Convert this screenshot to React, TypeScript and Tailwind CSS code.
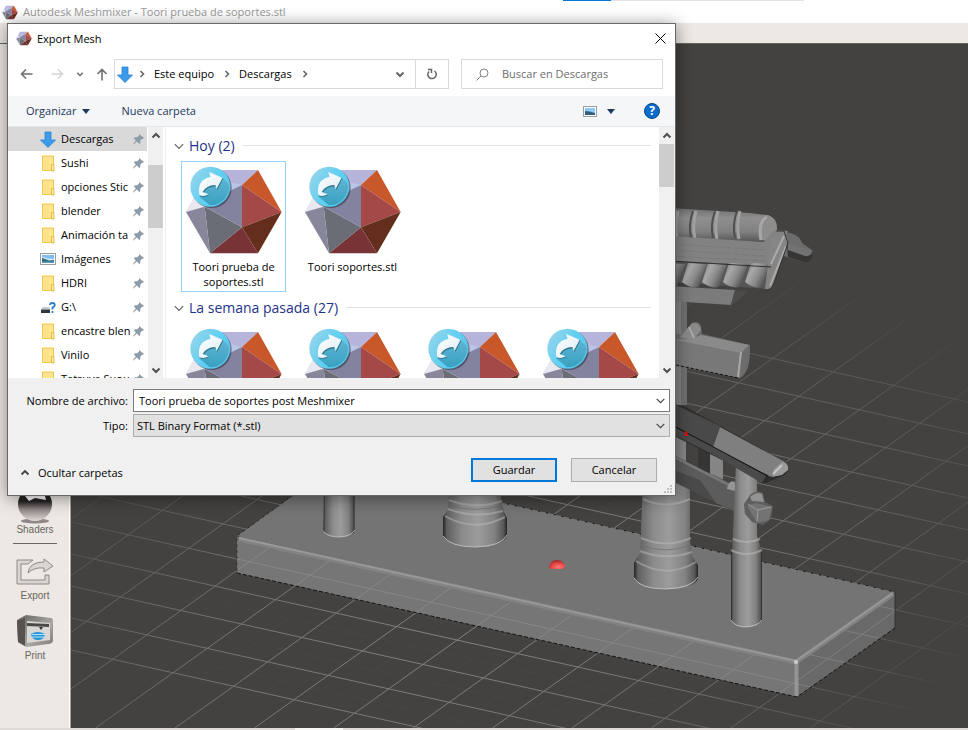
import React from "react";

function GemIcon({ className }: { className?: string }) {
  return (
    <svg viewBox="60 132 294 256" className={className} aria-hidden="true">
      <GemFacets />
    </svg>
  );
}

function GemFacets() {
  return (
    <g>
      <path d="M135 135H279L231 180L119 245L63 261Z" fill="#b6b4da" />
      <path d="M231 180L119 245L150 160Z" fill="#b9c5e6" />
      <path d="M63 261L119 245L100 190Z" fill="#e9e8f0" />
      <path d="M279 135L350 261L231 180Z" fill="#c85729" />
      <path d="M231 180L350 261L231 307Z" fill="#a44848" />
      <path d="M350 261L279 385L231 307Z" fill="#652d1b" />
      <path d="M231 307L279 385H135Z" fill="#783336" />
      <path d="M119 245L231 307L135 385Z" fill="#6a6d75" />
      <path d="M63 261L119 245L135 385Z" fill="#88869a" />
      <path d="M231 180V307L119 245L200 195Z" fill="#83829f" />
    </g>
  );
}

function StlThumb() {
  return (
    <svg viewBox="54 117 306 276" className="block h-[92px] w-[102px] shrink-0" aria-hidden="true">
      <defs>
        <linearGradient id="badge" x1="0" y1="0.2" x2="1" y2="0.8">
          <stop offset="0" stopColor="#98d4ea" />
          <stop offset="0.5" stopColor="#62d0f2" />
          <stop offset="1" stopColor="#52c4e8" />
        </linearGradient>
        <linearGradient id="badgeShade" x1="0" y1="0" x2="0" y2="1">
          <stop offset="0" stopColor="#5fb4d4" />
          <stop offset="1" stopColor="#2b9ab8" />
        </linearGradient>
        <linearGradient id="arrow" x1="0" y1="0" x2="1" y2="1">
          <stop offset="0" stopColor="#ffffff" />
          <stop offset="1" stopColor="#dcecf2" />
        </linearGradient>
        <clipPath id="badgeClip"><circle cx="136" cy="185" r="56" /></clipPath>
      </defs>
      <GemFacets />
      <circle cx="140" cy="189" r="60" fill="#2b3340" opacity="0.55" />
      <circle cx="136" cy="185" r="60" fill="url(#badge)" />
      <g clipPath="url(#badgeClip)">
        <path d="M172 159L230 210L170 270L102 214L120 190Z" fill="url(#badgeShade)" />
      </g>
      <path d="M135 144L175 160L157 195L154 184Q128 184 116 203L133 210Q120 218 105 214Q97 166 137 159Z" fill="#2b6f82" />
      <path d="M133 141L173 158L155 192L151 180Q124 181 113 201L131 208Q118 216 103 211Q95 164 136 156Z" fill="url(#arrow)" />
    </svg>
  );
}

function DownArrow({ className }: { className?: string }) {
  return (
    <svg viewBox="0 0 16 17" className={className} aria-hidden="true">
      <path d="M5 1H11V9H15.500L8 16.500L.5 9H5Z" fill="#3a9bea" stroke="#2b83cf" strokeWidth="0.8" />
    </svg>
  );
}

function FolderIcon() {
  return (
    <svg viewBox="0 0 16 17" className="h-[17px] w-4" aria-hidden="true">
      <path d="M2.500 1H13.500V15.500H2.500Z" fill="#ffe38d" stroke="#efc751" />
      <path d="M11.500 9.500H14V16H11.500Z" fill="#ffe9a6" stroke="#e9bd44" />
    </svg>
  );
}

function PictureIcon() {
  return (
    <svg viewBox="0 0 16 12" className="h-3 w-4" aria-hidden="true">
      <rect x=".5" y=".5" width="15" height="11" fill="#fff" stroke="#979ea5" />
      <rect x="2" y="2" width="12" height="8" fill="#7cc0ef" />
      <path d="M2 4L8 5.500L14 6V8H2Z" fill="#d5eaf4" />
      <path d="M2 5Q6 6 9 7.500L14 7V10H2Z" fill="#2f6a72" />
      <path d="M2 8.500H14V10H2Z" fill="#5b9cc4" />
    </svg>
  );
}

function DriveIcon() {
  return (
    <svg viewBox="0 0 16 14" className="h-3.5 w-4" aria-hidden="true">
      <path d="M3 7H9L10 9.500H1Z" fill="#c4c6c8" />
      <path d="M1 9.500H10V13H1Z" fill="#35383b" />
      <path d="M10 5Q10 3 12.300 3Q14.800 3 14.800 5Q14.800 6.500 12.500 7.500V9.500M12.500 11V13" fill="none" stroke="#fff" strokeWidth="3" />
      <path d="M10 5Q10 3 12.300 3Q14.800 3 14.800 5Q14.800 6.500 12.500 7.500V9.500M12.500 11V13" fill="none" stroke="#2c7fc2" strokeWidth="1.800" />
    </svg>
  );
}

function PinIcon() {
  return (
    <svg viewBox="0 0 11 11" className="h-[11px] w-[11px] shrink-0" aria-hidden="true">
      <path d="M6 0L11 4L9.500 5L8.500 5L7 7.500L7.500 9L6.500 10L3.800 7.500L.5 10.500L0 10L2.800 6.500L.8 4.300L2 3.300H4L6 1.800Z" fill="#8d9ba6" />
    </svg>
  );
}

type Dir = "up" | "down" | "right";
const chevrons: Record<Dir, string> = {
  up: "M1.500 6.500L5 3L8.500 6.500",
  down: "M1.500 3.500L5 7L8.500 3.500",
  right: "M3.500 2L6.500 5L3.500 8",
};

function Chevron({ dir, className, stroke = "#555", width = 1.6 }: { dir: Dir; className?: string; stroke?: string; width?: number }) {
  return (
    <svg viewBox="0 0 10 10" className={className ?? "h-2.5 w-2.5"} aria-hidden="true">
      <path d={chevrons[dir]} fill="none" stroke={stroke} strokeWidth={width} />
    </svg>
  );
}

const majorSlow = Array.from({ length: 15 }, (_, i) => i - 10);
const majorFast = Array.from({ length: 14 }, (_, i) => i - 5);

function GridLines() {
  return (
    <g strokeWidth="1">
      {majorSlow.map((k) => (
        <g key={`s${k}`}>
          <line x1="71" y1={522 + 32 * k} x2="968" y2={722 + 32 * k} stroke="#a2a2a0" />
          <line x1="71" y1={506 + 32 * k} x2="968" y2={706 + 32 * k} stroke="#a2a2a0" opacity="0.08" />
        </g>
      ))}
      {majorFast.map((j) => (
        <g key={`f${j}`}>
          <line x1={175 + 79.4 * j} y1="728" x2={175 + 79.4 * j + 701} y2="228" stroke="#a2a2a0" />
          <line x1={215 + 79.4 * j} y1="728" x2={215 + 79.4 * j + 701} y2="228" stroke="#a2a2a0" opacity="0.08" />
        </g>
      ))}
    </g>
  );
}

function Scene() {
  return (
    <svg viewBox="71 44 897 684" preserveAspectRatio="xMinYMin slice" className="block h-full min-h-0 w-full" role="img" aria-label="Modelo 3D">
      <defs>
        <radialGradient id="fade" gradientUnits="userSpaceOnUse" cx="0" cy="0" r="1" gradientTransform="translate(480 610) rotate(-18) scale(600 310)">
          <stop offset="0" stopColor="#fff" stopOpacity="0.7" />
          <stop offset="0.5" stopColor="#fff" stopOpacity="0.5" />
          <stop offset="0.8" stopColor="#fff" stopOpacity="0.25" />
          <stop offset="1" stopColor="#fff" stopOpacity="0" />
        </radialGradient>
        <mask id="gridMask" maskUnits="userSpaceOnUse" x="71" y="44" width="897" height="684">
          <rect x="71" y="44" width="897" height="684" fill="url(#fade)" />
        </mask>
        <linearGradient id="pole">
          <stop offset="0" stopColor="#222" />
          <stop offset="0.06" stopColor="#606060" />
          <stop offset="0.3" stopColor="#8b8b8b" />
          <stop offset="0.55" stopColor="#9c9c9c" />
          <stop offset="0.8" stopColor="#828282" />
          <stop offset="0.95" stopColor="#565656" />
          <stop offset="1" stopColor="#222" />
        </linearGradient>
        <linearGradient id="tube" x1="0" y1="0" x2="0" y2="1">
          <stop offset="0" stopColor="#6e6e6e" />
          <stop offset="0.3" stopColor="#8f8f8f" />
          <stop offset="0.7" stopColor="#808080" />
          <stop offset="1" stopColor="#555" />
        </linearGradient>
        <linearGradient id="tile" x1="0" y1="0" x2="1" y2="0.5">
          <stop offset="0" stopColor="#6a6a6a" />
          <stop offset="0.35" stopColor="#a8a8a8" />
          <stop offset="0.65" stopColor="#888" />
          <stop offset="1" stopColor="#484848" />
        </linearGradient>
        <radialGradient id="dome" cx="0.6" cy="0.8" r="0.9">
          <stop offset="0" stopColor="#ff7a7a" />
          <stop offset="0.5" stopColor="#e64343" />
          <stop offset="1" stopColor="#7e2020" />
        </radialGradient>
        <clipPath id="faces"><path d="M237 539L796 664L895 594V628L797 697L237 573Z" /></clipPath>
        <clipPath id="far"><path d="M460 484V493L895 592V480Z" /></clipPath>
      </defs>

      <rect x="71" y="44" width="1400" height="1000" fill="#434240" />
      <g mask="url(#gridMask)"><GridLines /></g>

      {/* slab */}
      <path d="M237 536L350 455L895 592L796 662Z" fill="#747474" />
      <path d="M237 537L796 662L797 697L237 573Z" fill="#767676" />
      <path d="M796 662L895 592V628L797 697Z" fill="#696969" />
      <g clipPath="url(#faces)" opacity="0.4"><GridLines /></g>
      <path d="M239 539L796 662L893 594" fill="none" stroke="#838383" strokeWidth="5" strokeLinejoin="round" />
      <path d="M239 538L796 661L893 593" fill="none" stroke="#989898" strokeWidth="2" />
      <path d="M796.500 663V696" stroke="#949494" strokeWidth="4" />
      <circle cx="796" cy="662" r="2" fill="#cfcfcf" />
      <path d="M237 573L797 697L895 628" fill="none" stroke="#141414" strokeDasharray="4 2" />
      <path d="M895 628V592" stroke="#333" />
      <path d="M293 495L237 536V573" fill="none" stroke="#2a2a2a" strokeDasharray="2 4" />
      {/* ground beyond the slab's far edge */}
      <path d="M460 484V493L895 592V480Z" fill="#434240" />
      <g mask="url(#gridMask)"><g clipPath="url(#far)"><GridLines /></g></g>
      <path d="M468 495L895 592" stroke="#111" strokeDasharray="2 6" />

      {/* left pole */}
      <path d="M324 480H354.500V531Q354 537 339 537Q325 536 323.500 530Z" fill="url(#pole)" />
      <path d="M324 532Q328 537 340 537Q351 536 355 530" fill="none" stroke="#c9c3c3" opacity="0.8" />
      {/* second column */}
      <path d="M450 480H501V500L504 512L507 518V535Q505 547 476 547Q446 546 443 535V517L448 510Z" fill="url(#pole)" />
      <path d="M449 500Q475 510 502 501M448 509Q475 519 503 511M445 516Q474 533 505 517" fill="none" stroke="#bcbaba" strokeWidth="2" opacity="0.5" />
      <path d="M449 505Q475 514 503 505" fill="none" stroke="#6c6c6c" opacity="0.7" />
      <path d="M443 536Q450 547 476 547Q502 546 507 535" fill="none" stroke="#cfc8c8" opacity="0.8" />
      {/* marker */}
      <path d="M549 568Q550 560 557 560Q564 560 565 567L562 569H552Z" fill="url(#dome)" />

      {/* rear column */}
      <path d="M674 300H687V405H674Z" fill="#707070" />
      <path d="M674 300H681V405H674Z" fill="#838383" />

      {/* roof */}
      <path d="M670 286L735 290L731 305L670 301Z" fill="#7b7b7b" />
      <path d="M735 290L749 291L731 306Z" fill="#4c4b4a" />
      <path d="M783 232Q799 233 802 243L812 250Q814 260 806 263L784 256Z" fill="#6c6c6c" />
      <path d="M787 245L812 252Q814 261 806 263L788 257Z" fill="#353535" />
      <path d="M788 243L812 251Q811 257 805 256L788 250Z" fill="#727272" />
      <path d="M670 208L750 213L767 215Q775 217 777 230L770 242L670 237Z" fill="url(#tube)" />
      {[679, 697, 719, 741].map((x) => (
        <g key={x}>
          <path d={`M${x - 4} 211Q${x - 9} 225 ${x - 6} 238`} fill="none" stroke="#505050" strokeWidth="2" />
          <path d={`M${x - 1} 211Q${x - 5} 225 ${x - 2} 239`} fill="none" stroke="#a3a0a0" strokeWidth="3" />
        </g>
      ))}
      <path d="M759 239Q756 215 768 215Q778 218 777 231L767 241Z" fill="#8d8d8d" />
      <path d="M761 240Q758 221 767 217" fill="none" stroke="#aaa6a6" strokeWidth="3" />
      <path d="M670 236L764 242L774 230L788 231L772 266L670 261Z" fill="#828282" />
      <path d="M670 244L765 250M670 250L766 256M670 256L766 261" stroke="#7a7a7a" strokeDasharray="7 2" />
      <path d="M670 261L771 267L766 289L670 282Z" fill="#565656" />
      {[666, 688, 708, 729, 751].map((x) => (
        <path key={x} d={`M${x} 263L${x + 19} 264L${x + 11} 287Q${x + 2} 289 ${x - 6} 282Z`} fill="url(#tile)" />
      ))}
      <path d="M771 239L785 232L788 241L773 285Q770 291 765 289Z" fill="#858585" />
      <path d="M784 236L771 264M786 246L770 286" stroke="#aeaaaa" strokeWidth="2" />
      <path d="M670 261L771 267" stroke="#303030" />
      <path d="M765 290Q771 291 774 283L788 243L784 231H776" fill="none" stroke="#333" />

      {/* upper cross bar */}
      <path d="M670 332L684 336L694 322Q700 322 701 327L702 334L750 345Q751 372 740 378L670 365Z" fill="#6c6c6c" />
      <path d="M676 339L686 336L742 350L740 378L676 365Z" fill="#787878" />
      <path d="M680 337L692 323Q700 322 701 330L693 340Z" fill="#8a8a8a" />
      <path d="M690 339L701 335L749 345L741 353L676 340Z" fill="#8a8a8a" />
      <path d="M689 327L694 338M741 352L738 377" fill="none" stroke="#aaa6a6" strokeWidth="2" />
      <path d="M676 365L738 378" stroke="#101010" strokeDasharray="3 2" />

      {/* right column */}
      <path d="M643 480H690V540L692 556L698 565V578Q696 589 666 589Q637 588 634 577V563L640 553Z" fill="url(#pole)" />
      <path d="M643 499Q666 510 690 499M641 538Q666 549 691 538M640 551Q666 561 692 552M636 561Q666 580 696 562" fill="none" stroke="#bcb8b8" strokeWidth="2" opacity="0.5" />
      <path d="M641 545Q666 555 691 545" fill="none" stroke="#6c6c6c" opacity="0.7" />
      <path d="M634 578Q640 589 666 589Q692 588 698 577" fill="none" stroke="#d0c9c9" opacity="0.8" />

      {/* lower braces */}
      <path d="M674 430H686V462H674Z" fill="#858585" />
      <path d="M698 445L712 449V481L698 476Z" fill="#353535" />
      <path d="M710 450L723 458V480L710 482Z" fill="#858585" />
      <path d="M674 455L700 469L735 485V512L674 482Z" fill="#4a4a4a" />
      <path d="M674 459L735 489V511L716 503L700 480L674 470Z" fill="#5c5c5c" />
      <path d="M674 457L735 488" stroke="#777" strokeWidth="3" />
      <path d="M727 489Q729 479 735 482V491Z" fill="#959595" />

      {/* right pole */}
      <path d="M736 464H757V535L762 552V620Q760 627 746 627Q733 626 731 620V552L733 530Z" fill="url(#pole)" />
      <path d="M733 539Q746 545 760 539M731 550Q746 558 762 550" fill="none" stroke="#b9b6b6" strokeWidth="2" opacity="0.6" />
      <path d="M731 620Q735 627 746 627Q758 626 762 620" fill="none" stroke="#d0caca" opacity="0.8" />

      {/* slanted beam */}
      <path d="M674 404L686 407L787 463Q791 471 783 476L770 481Q765 484 762 483L740 469L674 436Z" fill="#2c2c2c" />
      <path d="M674 404L720 426L713 447L674 426Z" fill="#494949" />
      <path d="M720 427L785 462L771 477L713 447Z" fill="#7f7f7f" />
      <path d="M674 427L715 448L766 476L762 483L710 453L674 435Z" fill="#4a4a4a" />
      <path d="M674 426L768 476" stroke="#151515" />
      <path d="M772 477L774 469L782 462Q789 462 788 470L782 475Z" fill="#9a9a9a" />
      <path d="M773 474L782 465" stroke="#c8c4c4" strokeWidth="2" />
      <path d="M685 431L687 432L688 436H685Z" fill="#f00" />

      {/* knob */}
      <path d="M744 504L750 495Q757 489 763 493L765 502L773 506L771 519L763 525L752 522L745 514Z" fill="#5e5e5e" />
      <path d="M750 497Q757 491 762 494L764 502L752 501Z" fill="#939393" />
      <path d="M747 506L756 503L772 507L769 520L757 523Z" fill="#737373" />
      <path d="M748 504L757 510L771 507M758 510L757 521" fill="none" stroke="#9c9c9c" />
    </svg>
  );
}

function ToolLabel({ children }: { children: React.ReactNode }) {
  return <span className="font-['Liberation_Sans',sans-serif] text-[10px] leading-3 text-[#686460]">{children}</span>;
}

function ToolSidebar() {
  return (
    <aside className="flex w-[71px] shrink-0 flex-col items-center border-r border-[#a5a3a0] bg-[#ede8e3] pt-[444px] shadow-[inset_-1px_0_0_#ffffff]">
      <button className="flex flex-col items-center">
        <svg viewBox="0 0 40 36" className="h-9 w-10" aria-hidden="true">
          <defs>
            <linearGradient id="ball" x1="0" y1="0" x2="0" y2="1">
              <stop offset="0" stopColor="#222" />
              <stop offset="0.42" stopColor="#252322" />
              <stop offset="0.65" stopColor="#8c8482" />
              <stop offset="1" stopColor="#e0d8d6" />
            </linearGradient>
          </defs>
          <ellipse cx="20" cy="33" rx="14" ry="2.500" fill="#8e8987" />
          <circle cx="20" cy="16" r="17" fill="url(#ball)" />
          <path d="M10 8L14 13L20 10L31 12L29 4H10Z" fill="#fff" />
        </svg>
        <ToolLabel>Shaders</ToolLabel>
      </button>
      <hr className="mt-[7px] mb-3 w-11 border-[#6b6865]" />
      <button className="flex flex-col items-center">
        <svg viewBox="0 0 40 34" className="h-[34px] w-10" aria-hidden="true">
          <path d="M2 4H18L13 8H6V24H30V19H34V28H2Z" fill="#d9d6d2" stroke="#85817d" strokeWidth="0.900" />
          <path d="M13 17Q14 6 29 6V3L38 10L29 16V12Q19 11 13 17Z" fill="#d9d6d2" stroke="#85817d" strokeWidth="0.900" />
        </svg>
        <ToolLabel>Export</ToolLabel>
      </button>
      <button className="mt-3 flex flex-col items-center">
        <svg viewBox="0 0 40 36" className="h-9 w-10" aria-hidden="true">
          <defs>
            <linearGradient id="printer" x1="0" y1="0" x2="1" y2="1">
              <stop offset="0" stopColor="#62605e" />
              <stop offset="0.6" stopColor="#aaa8a5" />
              <stop offset="1" stopColor="#7b7876" />
            </linearGradient>
          </defs>
          <path d="M2 6L11 1L36 4Q38 4 38 7V27Q37 30 33 30L11 33L3 28Z" fill="url(#printer)" />
          <path d="M2 7L10 4V32L3 28Z" fill="#555250" />
          <path d="M12 7L35 9V26L12 29Z" fill="#d9d6d3" />
          <path d="M12 9L34 10V13L12 12Z" fill="#4c4a49" />
          <path d="M24 13H28L26 16Z" fill="#333" />
          <path d="M16 20Q23 16 30 20Q29 26 23 26Q17 26 16 20Z" fill="#2697d8" />
          <path d="M17 20.500H30M17 23H29" stroke="#b9e4f8" />
        </svg>
        <ToolLabel>Print</ToolLabel>
      </button>
    </aside>
  );
}

function Scrollbar({ thumb }: { thumb: string }) {
  return (
    <div className="flex w-[15px] shrink-0 flex-col items-center bg-[#f0f0f0]">
      <div className="flex h-[17px] items-center"><Chevron dir="up" stroke="#505050" width={2} /></div>
      <div className="min-h-0 w-full flex-1"><div className={thumb} /></div>
      <div className="flex h-[17px] items-center"><Chevron dir="down" stroke="#505050" width={2} /></div>
    </div>
  );
}

const places: { name: string; icon: "down" | "folder" | "picture" | "drive" }[] = [
  { name: "Descargas", icon: "down" },
  { name: "Sushi", icon: "folder" },
  { name: "opciones Stic", icon: "folder" },
  { name: "blender", icon: "folder" },
  { name: "Animación ta", icon: "folder" },
  { name: "Imágenes", icon: "picture" },
  { name: "HDRI", icon: "folder" },
  { name: "G:\\", icon: "drive" },
  { name: "encastre blen", icon: "folder" },
  { name: "Vinilo", icon: "folder" },
  { name: "Tatsuya Suou", icon: "folder" },
];

function PlacesTree() {
  return (
    <ul className="w-[139px] shrink-0 overflow-hidden">
      {places.map((p, i) => (
        <li key={p.name}>
          <button className={`flex h-6 w-full items-center pr-[3px] pl-8 text-left ${i === 0 ? "bg-[#d9d9d9]" : ""}`}>
            <span className="flex w-4 shrink-0 justify-center">
              {p.icon === "down" && <DownArrow className="h-[17px] w-4" />}
              {p.icon === "folder" && <FolderIcon />}
              {p.icon === "picture" && <PictureIcon />}
              {p.icon === "drive" && <DriveIcon />}
            </span>
            <span className="ml-[5px] flex-1 whitespace-nowrap">{p.name}</span>
            <PinIcon />
          </button>
        </li>
      ))}
    </ul>
  );
}

function Group({ title, children }: { title: string; children: React.ReactNode }) {
  return (
    <section>
      <h2 className="flex h-[34px] items-center pt-[3px] text-[14px] leading-5 text-[#1e3287]">
        <Chevron dir="down" className="mr-1 h-3 w-3" stroke="#666" width={1} />
        {title}
        <span className="ml-2 h-px flex-1 bg-[#e2e2e2]" />
      </h2>
      <div className="flex gap-[14px] pl-2">{children}</div>
    </section>
  );
}

function FileTile({ name, selected }: { name?: string; selected?: boolean }) {
  const frame = selected ? "border-[#99d1ff]" : "border-transparent";
  return (
    <button className={`mb-[-3px] flex h-[131px] w-[105px] shrink-0 flex-col items-center border pt-[2px] text-center leading-[15px] ${frame}`}>
      <StlThumb />
      {name && <span className="mt-[3px] w-[92px]">{name}</span>}
    </button>
  );
}

function ExportDialog() {
  return (
    <div role="dialog" aria-label="Export Mesh" className="absolute top-[23px] left-[7px] w-[669px] max-w-full border border-[#686868] bg-white shadow-[0_2px_16px_rgba(0,0,0,0.45)]">
      <header className="flex h-[29px] items-center pr-[9px] pl-2">
        <GemIcon className="h-[15px] w-4" />
        <h1 className="ml-[5px] flex-1">Export Mesh</h1>
        <button aria-label="Cerrar">
          <svg viewBox="0 0 11 11" className="h-[11px] w-[11px]" aria-hidden="true"><path d="M.5 .5L10.500 10.500M10.500 .5L.5 10.500" stroke="#000" /></svg>
        </button>
      </header>

      <div className="flex h-[43px] items-center px-3 pb-px">
        <button aria-label="Atrás">
          <svg viewBox="0 0 13 12" className="h-3 w-[13px]" aria-hidden="true"><path d="M12.500 6H1.500M6 1.500L1.500 6L6 10.500" fill="none" stroke="#707070" strokeWidth="1.600" /></svg>
        </button>
        <button aria-label="Adelante" className="ml-[18px]">
          <svg viewBox="0 0 13 12" className="h-3 w-[13px]" aria-hidden="true"><path d="M.5 6H11.500M7 1.500L11.500 6L7 10.500" fill="none" stroke="#d6d6d6" strokeWidth="1.600" /></svg>
        </button>
        <button aria-label="Recientes" className="ml-3"><Chevron dir="down" className="h-2 w-2" stroke="#777" width={2} /></button>
        <button aria-label="Subir" className="ml-3">
          <svg viewBox="0 0 12 13" className="h-[13px] w-3" aria-hidden="true"><path d="M6 12.500V1.500M1.500 6L6 1.500L10.500 6" fill="none" stroke="#707070" strokeWidth="1.600" /></svg>
        </button>
        <nav className="ml-[6px] flex h-[30px] flex-1 items-center border border-[#d9d9d9] pl-[2px]">
          <DownArrow className="h-[17px] w-4" />
          <span className="ml-1"><Chevron dir="right" stroke="#666" /></span>
          <button className="ml-[7px]">Este equipo</button>
          <span className="ml-2"><Chevron dir="right" stroke="#666" /></span>
          <button className="ml-[7px]">Descargas</button>
          <span className="ml-2"><Chevron dir="right" stroke="#666" /></span>
          <button aria-label="Ubicaciones" className="mr-[10px] ml-auto"><Chevron dir="down" stroke="#666" width={2} /></button>
          <button aria-label="Actualizar" className="flex h-full w-[33px] items-center justify-center border-l border-[#d9d9d9]">
            <svg viewBox="0 0 12 12" className="h-3 w-3" aria-hidden="true"><path d="M8.500 3A4.200 4.200 0 1 1 3 3.500M2 1.500H5.500V5" fill="none" stroke="#666" strokeWidth="1.500" /></svg>
          </button>
        </nav>
        <label className="ml-3 flex h-[30px] w-[202px] items-center border border-[#d9d9d9] pl-[14px]">
          <svg viewBox="0 0 13 13" className="h-[13px] w-[13px]" aria-hidden="true"><circle cx="8" cy="5" r="4" fill="none" stroke="#85808a" /><path d="M5 8L.5 12.500" stroke="#85808a" /></svg>
          <input type="search" aria-label="Buscar en Descargas" placeholder="Buscar en Descargas" className="ml-[13px] w-40 outline-none placeholder:text-[#6d6d6d]" />
        </label>
      </div>

      <div className="flex h-[31px] items-center border-b border-[#e5e8eb] bg-[#f4f6f8] pr-[15px] pl-[18px] text-[#1e395b]">
        <button className="flex items-center">
          Organizar
          <svg viewBox="0 0 8 5" className="ml-[6px] h-[5px] w-2" aria-hidden="true"><path d="M0 0H8L4 5Z" fill="#1e395b" /></svg>
        </button>
        <button className="ml-[31px]">Nueva carpeta</button>
        <button aria-label="Vista" className="ml-auto flex items-center">
          <svg viewBox="0 0 14 11" className="h-[11px] w-3.5" aria-hidden="true">
            <rect x=".5" y=".5" width="13" height="10" fill="#fff" stroke="#979ea5" />
            <rect x="2" y="2" width="10" height="7" fill="#8cc8f4" />
            <path d="M2 5Q6 5 12 7V9H2Z" fill="#2e5f80" />
          </svg>
          <svg viewBox="0 0 8 5" className="ml-[10px] h-[5px] w-2" aria-hidden="true"><path d="M0 0H8L4 5Z" fill="#1e395b" /></svg>
        </button>
        <button aria-label="Ayuda" className="ml-[29px] flex h-4 w-4 items-center justify-center rounded-full border border-[#0b4a86] bg-[#0a6ccc] text-[12px] leading-3 font-bold text-white">?</button>
      </div>

      <div className="flex h-[251px] overflow-hidden bg-white">
        <PlacesTree />
        <div className="ml-px flex"><Scrollbar thumb="mt-[21px] h-[63px] w-full bg-[#cdcdcd]" /></div>
        <div className="ml-[2px] min-w-0 flex-1 overflow-hidden border-l border-[#f0f0f0] pr-2 pl-[7px]">
          <Group title="Hoy (2)">
            <FileTile name="Toori prueba de soportes.stl" selected />
            <FileTile name="Toori soportes.stl" />
          </Group>
          <Group title="La semana pasada (27)">
            <FileTile />
            <FileTile />
            <FileTile />
            <FileTile />
          </Group>
        </div>
        <div className="flex bg-[#f0f0f0] pr-px"><Scrollbar thumb="h-[43px] w-full bg-[#cdcdcd]" /></div>
      </div>

      <footer className="relative bg-[#f0f0f0] pt-[11px] pr-[5px] pb-[13px]">
        <div className="flex items-center">
          <label htmlFor="file-name" className="w-[120px] text-right">Nombre de archivo:</label>
          <div className="ml-[5px] flex h-[23px] flex-1 items-center border border-[#7a7a7a] bg-white pr-[3px] pl-[5px]">
            <input id="file-name" defaultValue="Toori prueba de soportes post Meshmixer" className="min-w-0 flex-1 outline-none" />
            <Chevron dir="down" className="h-[11px] w-[11px]" stroke="#444" width={1.1} />
          </div>
        </div>
        <div className="mt-[2px] flex items-center">
          <label htmlFor="file-type" className="w-[120px] text-right">Tipo:</label>
          <div className="ml-[5px] grid h-[23px] flex-1 items-center border border-[#adadad] bg-[#e1e1e1]">
            <select id="file-type" className="col-start-1 row-start-1 w-full appearance-none pl-[3px] outline-none">
              <option>STL Binary Format (*.stl)</option>
            </select>
            <span className="pointer-events-none col-start-1 row-start-1 mr-[3px] justify-self-end"><Chevron dir="down" className="h-[11px] w-[11px]" stroke="#444" width={1.1} /></span>
          </div>
        </div>
        <div className="mt-[21px] flex items-center pr-[13px] pl-3">
          <button className="mt-[5px] flex items-center gap-2"><Chevron dir="up" stroke="#444" width={1.8} />Ocultar carpetas</button>
          <button className="ml-auto h-6 w-[86px] border-2 border-[#0078d7] bg-[#e1e1e1]">Guardar</button>
          <button className="ml-[14px] h-6 w-[86px] border border-[#adadad] bg-[#e1e1e1]">Cancelar</button>
        </div>
        <svg viewBox="0 0 8 8" className="absolute right-[3px] bottom-[2px] h-2 w-2" aria-hidden="true">
          <path d="M6 0H8V2H6ZM3 3H5V5H3ZM6 3H8V5H6ZM0 6H2V8H0ZM3 6H5V8H3ZM6 6H8V8H6Z" fill="#bfbfbf" />
        </svg>
      </footer>
    </div>
  );
}

export default function App() {
  return (
    <main className="relative flex h-screen flex-col overflow-hidden bg-white font-['Open_Sans','Noto_Sans',sans-serif] text-[11px] leading-4 text-black">
      <div className="flex h-px shrink-0">
        <span className="ml-[563px] w-12 bg-[#0078d7]" />
        <span className="w-[193px] bg-[#e3e3e3]" />
      </div>
      <div className="flex h-[22px] shrink-0 items-center pl-[2px] text-[#999]">
        <GemIcon className="h-[15px] w-4" />
        <span className="ml-[5px]">Autodesk Meshmixer - Toori prueba de soportes.stl</span>
      </div>
      <div className="h-[21px] shrink-0 border-b border-[#63665f] bg-[#ede8e3]" />
      <div className="flex min-h-0 flex-1">
        <ToolSidebar />
        <div className="min-w-0 flex-1 overflow-hidden"><Scene /></div>
      </div>
      <div className="flex h-[2px] shrink-0 bg-[#dedad7]">
        <span className="ml-[295px] w-12 bg-[#f8f7f6]" />
      </div>
      <ExportDialog />
    </main>
  );
}
